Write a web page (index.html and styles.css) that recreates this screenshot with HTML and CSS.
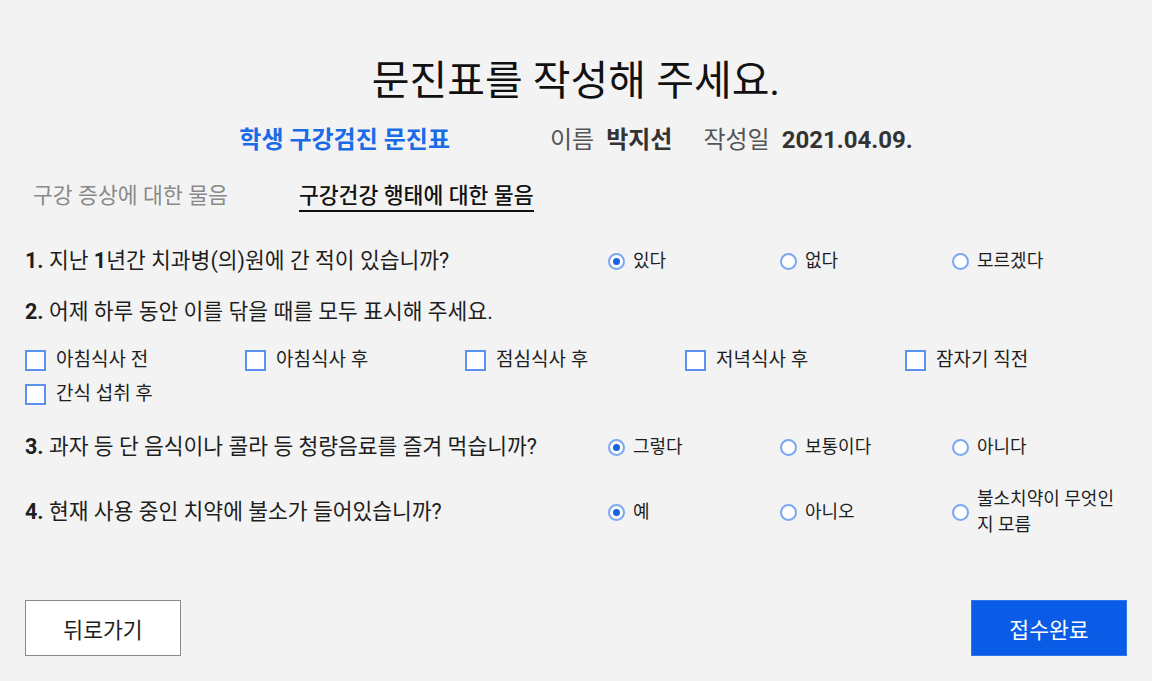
FILE: index.html
```html
<!DOCTYPE html>
<html lang="ko">
<head>
<meta charset="utf-8">
<title>문진표</title>
<link rel="stylesheet" href="styles.css">
</head>
<body>
<div class="page">
  <h1 class="title">문진표를 작성해 주세요.</h1>
  <div class="info">
    <span class="info-title">학생 구강검진 문진표</span>
    <span class="info-label">이름</span><span class="info-value info-name">박지선</span>
    <span class="info-label">작성일</span><span class="info-value">2021.04.09.</span>
  </div>
  <div class="tabs">
    <span class="tab">구강 증상에 대한 물음</span>
    <span class="tab tab-active">구강건강 행태에 대한 물음</span>
  </div>

  <div class="q q1">
    <div class="q-text"><span class="num">1.</span> 지난 <span class="num">1</span>년간 치과병(의)원에 간 적이 있습니까?</div>
    <label class="opt"><span class="radio checked"></span><span class="opt-label">있다</span></label>
    <label class="opt"><span class="radio"></span><span class="opt-label">없다</span></label>
    <label class="opt"><span class="radio"></span><span class="opt-label">모르겠다</span></label>
  </div>

  <div class="q q2">
    <div class="q-text"><span class="num">2.</span> 어제 하루 동안 이를 닦을 때를 모두 표시해 주세요.</div>
  </div>
  <div class="checks">
    <label class="chk"><span class="box"></span><span class="chk-label">아침식사 전</span></label>
    <label class="chk"><span class="box"></span><span class="chk-label">아침식사 후</span></label>
    <label class="chk"><span class="box"></span><span class="chk-label">점심식사 후</span></label>
    <label class="chk"><span class="box"></span><span class="chk-label">저녁식사 후</span></label>
    <label class="chk"><span class="box"></span><span class="chk-label">잠자기 직전</span></label>
    <label class="chk"><span class="box"></span><span class="chk-label">간식 섭취 후</span></label>
  </div>

  <div class="q q3">
    <div class="q-text"><span class="num">3.</span> 과자 등 단 음식이나 콜라 등 청량음료를 즐겨 먹습니까?</div>
    <label class="opt"><span class="radio checked"></span><span class="opt-label">그렇다</span></label>
    <label class="opt"><span class="radio"></span><span class="opt-label">보통이다</span></label>
    <label class="opt"><span class="radio"></span><span class="opt-label">아니다</span></label>
  </div>

  <div class="q q4">
    <div class="q-text"><span class="num">4.</span> 현재 사용 중인 치약에 불소가 들어있습니까?</div>
    <label class="opt"><span class="radio checked"></span><span class="opt-label">예</span></label>
    <label class="opt"><span class="radio"></span><span class="opt-label">아니오</span></label>
    <label class="opt"><span class="radio"></span><span class="opt-label opt-wrap">불소치약이 무엇인지 모름</span></label>
  </div>

  <div class="actions">
    <button class="btn btn-back">뒤로가기</button>
    <button class="btn btn-submit">접수완료</button>
  </div>
</div>
</body>
</html>
```

FILE: styles.css
```css
* { box-sizing: border-box; }
html, body { margin: 0; padding: 0; }
body {
  background: #f3f3f3;
  color: #1e1e1e;
  font-family: Roboto, "Noto Sans CJK KR", sans-serif;
  width: 1152px;
  height: 681px;
  overflow: hidden;
}
.page { padding: 57px 25px 0; }
.title {
  margin: 0;
  font-size: 41px;
  font-weight: 400;
  line-height: 48px;
  text-align: center;
  color: #111;
}
.info {
  display: flex;
  justify-content: center;
  align-items: baseline;
  margin-top: 19px;
  font-size: 24px;
  line-height: 32px;
}
.info-title { color: #1a6be6; font-weight: 700; margin-right: 100px; }
.info-label { color: #555; margin-right: 12px; }
.info-value { color: #333; font-weight: 700; }
.info-name { margin-right: 31px; }
.tabs {
  display: flex;
  gap: 71px;
  margin-top: 25px;
  padding-left: 8px;
  font-size: 21.6px;
  line-height: 29px;
}
.tab { color: #8a8a8a; border-bottom: 2px solid transparent; }
.tab-active { color: #111; font-weight: 500; border-bottom-color: #111; }

.q {
  display: grid;
  grid-template-columns: 1fr 172px 172px 174px;
  align-items: center;
  font-size: 21.5px;
}
.q-text { font-weight: 400; line-height: 30px; color: #1e1e1e; }
.num { font-weight: 700; }
.q1 { margin-top: 34px; }
.q2 { margin-top: 21px; }
.q3 { margin-top: 23px; }
.q4 { margin-top: 24px; min-height: 52px; }

.opt { display: flex; align-items: center; gap: 8px; font-size: 18px; }
.opt-label { line-height: 26px; color: #1e1e1e; }
.opt-wrap { width: 140px; }
.radio {
  flex: none;
  width: 17px;
  height: 17px;
  border-radius: 50%;
  border: 2px solid #7aa7f2;
  background: #fff;
  position: relative;
  margin-left: -1px;
}
.radio.checked::after {
  content: "";
  position: absolute;
  left: 50%;
  top: 50%;
  width: 7px;
  height: 7px;
  margin: -3.5px 0 0 -3.5px;
  border-radius: 50%;
  background: #1763e0;
}

.checks {
  display: grid;
  grid-template-columns: repeat(5, 220px);
  row-gap: 4px;
  margin-top: 18px;
  font-size: 19px;
}
.chk { display: flex; align-items: center; gap: 10px; height: 30px; }
.chk-label { line-height: 26px; color: #1e1e1e; }
.box {
  flex: none;
  width: 21px;
  height: 21px;
  border: 2px solid #5b91f0;
  background: #fff;
}

.actions {
  display: flex;
  justify-content: space-between;
  margin-top: 62px;
}
.btn {
  width: 156px;
  height: 56px;
  font-family: inherit;
  font-size: 21.6px;
  cursor: pointer;
}
.btn-back { background: #fff; border: 1px solid #8a8a8a; color: #1e1e1e; }
.btn-submit { background: #0a5ce6; border: 1px solid #2e74ea; color: #fff; }
```
